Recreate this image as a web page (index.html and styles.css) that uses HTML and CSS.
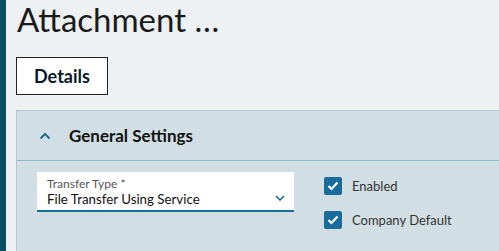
FILE: index.html
```html
<!DOCTYPE html>
<html lang="en">
<head>
    <meta charset="UTF-8">
    <title>Attachment</title>
    <link rel="stylesheet" href="styles.css">
</head>
<body>
    <div class="rail"></div>
    <div class="page">
        <h1 class="title">Attachment …</h1>
        <button class="tab">Details</button>

        <div class="panel">
            <div class="panel-head">
                <svg class="chev" width="12" height="8" viewBox="0 0 12 8">
                    <path d="M1.5 6.5 L6 2 L10.5 6.5" fill="none" stroke="#1d6d9c" stroke-width="2"/>
                </svg>
                <span class="panel-title">General Settings</span>
            </div>
            <div class="panel-body">
                <div class="select">
                    <div class="select-label">Transfer Type *</div>
                    <div class="select-value">File Transfer Using Service</div>
                    <svg class="select-chev" width="10" height="6" viewBox="0 0 10 6">
                        <path d="M1 1 L5 5 L9 1" fill="none" stroke="#1d6d9c" stroke-width="1.6"/>
                    </svg>
                </div>
                <div class="checks">
                    <label class="check">
                        <span class="box">
                            <svg width="12" height="10" viewBox="0 0 12 10"><path d="M1.5 5 L4.5 8 L10.5 1.5" fill="none" stroke="#fff" stroke-width="2.2"/></svg>
                        </span>
                        Enabled
                    </label>
                    <label class="check">
                        <span class="box">
                            <svg width="12" height="10" viewBox="0 0 12 10"><path d="M1.5 5 L4.5 8 L10.5 1.5" fill="none" stroke="#fff" stroke-width="2.2"/></svg>
                        </span>
                        Company Default
                    </label>
                </div>
            </div>
        </div>
    </div>
</body>
</html>
```

FILE: styles.css
```css
body{
    margin: 0;
    display: flex;
    height: 251px;
    overflow: hidden;
    background-color: #edf1f4;
    font-family: Lato, "Open Sans", sans-serif;
    color: #111;
}
.rail{
    width: 6px;
    flex: none;
    background-color: #0b4f63;
}
.page{
    flex: 1;
    display: flex;
    flex-direction: column;
    align-items: flex-start;
    padding-left: 10px;
    min-width: 0;
}
.title{
    margin: 0;
    padding-left: 1px;
    font-size: 33px;
    font-weight: 400;
    line-height: 38px;
    color: #1a1a1a;
    white-space: nowrap;
}
.tab{
    display: block;
    margin-top: 19px;
    width: 92px;
    height: 38px;
    background-color: #fff;
    border: 1px solid #222;
    font-family: inherit;
    font-size: 18px;
    font-weight: 700;
    color: #0a1a2a;
    padding: 0;
}
.panel{
    align-self: stretch;
    flex: 1;
    margin-top: 15px;
    margin-right: -20px;
    background-color: #d1dee3;
    border-top: 1px solid #b8c8cf;
    border-left: 1px solid #b8c8cf;
}
.panel-head{
    display: flex;
    align-items: center;
    height: 49px;
    border-bottom: 1px solid #8fb8c8;
    padding-left: 22px;
}
.chev{
    margin-right: 18px;
}
.panel-title{
    font-size: 17px;
    font-weight: 700;
    color: #111;
}
.panel-body{
    display: flex;
    padding: 11px 0 0 20px;
}
.select{
    position: relative;
    box-sizing: border-box;
    width: 257px;
    height: 40px;
    background-color: #fff;
    border-bottom: 2px solid #1d6d9c;
    padding-left: 10px;
}
.select-label{
    margin-top: 5px;
    font-size: 12px;
    line-height: 14px;
    color: #555;
}
.select-value{
    font-size: 13.3px;
    line-height: 17px;
    color: #111;
}
.select-chev{
    position: absolute;
    right: 9px;
    top: 23px;
}
.checks{
    display: flex;
    flex-direction: column;
    gap: 16px;
    margin-left: 30px;
    padding-top: 5px;
}
.check{
    display: flex;
    align-items: center;
    gap: 10px;
    font-size: 13px;
    color: #333;
}
.box{
    width: 18px;
    height: 18px;
    border-radius: 2px;
    background-color: #1a6c9c;
    display: flex;
    align-items: center;
    justify-content: center;
}
```
